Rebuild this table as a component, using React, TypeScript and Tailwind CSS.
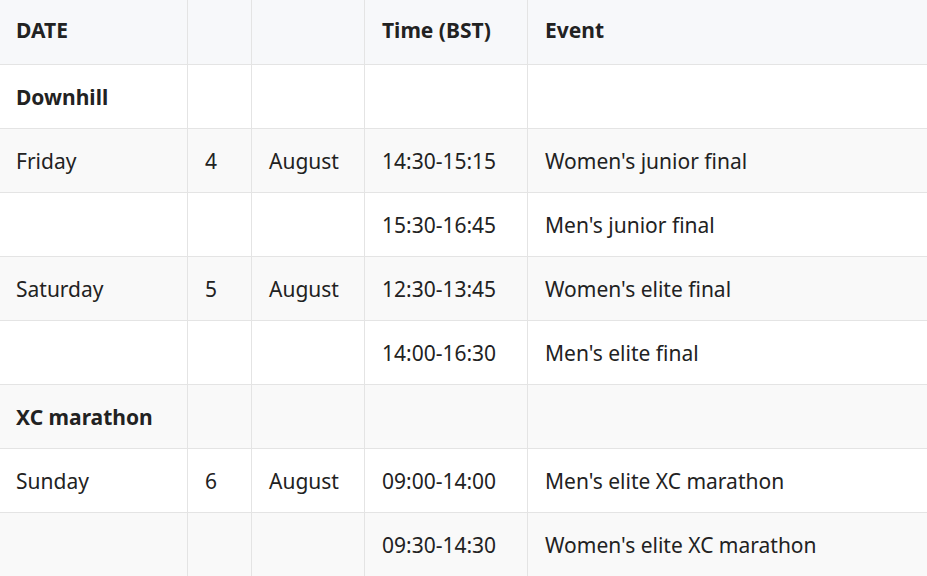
import React from "react";

type Row = { cells: string[]; bold?: boolean; bg: string };

const rows: Row[] = [
  { cells: ["Downhill", "", "", "", ""], bold: true, bg: "bg-white" },
  { cells: ["Friday", "4", "August", "14:30-15:15", "Women's junior final"], bg: "bg-[#f9f9f9]" },
  { cells: ["", "", "", "15:30-16:45", "Men's junior final"], bg: "bg-white" },
  { cells: ["Saturday", "5", "August", "12:30-13:45", "Women's elite final"], bg: "bg-[#f9f9f9]" },
  { cells: ["", "", "", "14:00-16:30", "Men's elite final"], bg: "bg-white" },
  { cells: ["XC marathon", "", "", "", ""], bold: true, bg: "bg-[#f9f9f9]" },
  { cells: ["Sunday", "6", "August", "09:00-14:00", "Men's elite XC marathon"], bg: "bg-white" },
  { cells: ["", "", "", "09:30-14:30", "Women's elite XC marathon"], bg: "bg-[#f9f9f9]" },
];

const header = ["DATE", "", "", "Time (BST)", "Event"];

function Cell({ text, i, bold, cls }: { text: string; i: number; bold?: boolean; cls: string }) {
  return (
    <div
      className={`${cls} leading-[31.5px] border-b border-[#e4e4e4] ${i < 4 ? "border-r" : ""} ${
        i === 0 ? "pl-4" : "pl-[17px]"
      } ${bold ? "font-bold" : "font-normal"} whitespace-nowrap`}
    >
      {text}
    </div>
  );
}

export default function App() {
  return (
    <div
      className="w-[927px] h-[576px] overflow-hidden bg-white text-[21px] text-[#222222]"
      style={{ fontFamily: '"Noto Sans", "Open Sans", sans-serif' }}
    >
      <div className="grid grid-cols-[188px_64px_113px_163px_1fr] bg-[#f7f8fa]">
        {header.map((t, i) => (
          <Cell key={i} text={t} i={i} bold cls="h-[65px] pt-[15px]" />
        ))}
      </div>
      {rows.map((r, ri) => (
        <div key={ri} className={`grid grid-cols-[188px_64px_113px_163px_1fr] ${r.bg}`}>
          {r.cells.map((t, i) => (
            <Cell key={i} text={t} i={i} bold={r.bold} cls="h-16 pt-[17px]" />
          ))}
        </div>
      ))}
    </div>
  );
}
